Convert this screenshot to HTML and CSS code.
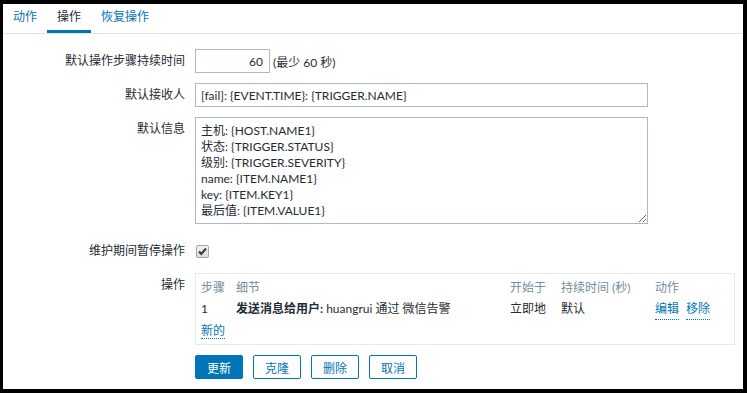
FILE: index.html
```html
<!DOCTYPE html>
<html lang="zh-CN">
<head>
<meta charset="UTF-8">
<meta name="viewport" content="width=device-width, initial-scale=1.0">
<title>操作</title>
<link rel="stylesheet" href="styles.css">
</head>
<body>

<div class="frame">
  <ul class="tabs">
    <li class="tab"><a href="#">动作</a></li>
    <li class="tab active"><a href="#">操作</a></li>
    <li class="tab"><a href="#">恢复操作</a></li>
  </ul>

  <div class="form">
    <label class="label">默认操作步骤持续时间</label>
    <div class="field">
      <input type="text" class="input input-step" value="60">
      <span class="hint">(最少 60 秒)</span>
    </div>

    <label class="label">默认接收人</label>
    <div class="field">
      <input type="text" class="input input-wide" value="[fail]: {EVENT.TIME}: {TRIGGER.NAME}">
    </div>

    <label class="label">默认信息</label>
    <div class="field">
      <textarea class="textarea">主机: {HOST.NAME1}
状态: {TRIGGER.STATUS}
级别: {TRIGGER.SEVERITY}
name: {ITEM.NAME1}
key: {ITEM.KEY1}
最后值: {ITEM.VALUE1}</textarea>
    </div>

    <label class="label">维护期间暂停操作</label>
    <div class="field field-check">
      <span class="checkbox">
        <svg width="11" height="11" viewBox="0 0 11 11"><path d="M2 5.5 L4.3 8 L9 2.5" fill="none" stroke="#3a3a3a" stroke-width="2"/></svg>
      </span>
    </div>

    <label class="label">操作</label>
    <div class="field field-ops">
      <div class="ops">
        <div class="ops-row ops-head">
          <span>步骤</span>
          <span>细节</span>
          <span>开始于</span>
          <span>持续时间 (秒)</span>
          <span>动作</span>
        </div>
        <div class="ops-row">
          <span>1</span>
          <span><b>发送消息给用户:</b> huangrui 通过 微信告警</span>
          <span>立即地</span>
          <span>默认</span>
          <span class="ops-links"><a href="#" class="link">编辑</a><a href="#" class="link">移除</a></span>
        </div>
        <div class="ops-new">
          <a href="#" class="link">新的</a>
        </div>
      </div>
    </div>

    <div class="label"></div>
    <div class="field buttons">
      <button class="btn btn-main">更新</button>
      <button class="btn">克隆</button>
      <button class="btn">删除</button>
      <button class="btn">取消</button>
    </div>
  </div>
</div>

</body>
</html>
```

FILE: styles.css
```css
body {
  margin: 0;
  font-family: Lato, "Noto Sans CJK SC", sans-serif;
  font-size: 12px;
  color: #1f2c33;
  background-color: #000;
}
.frame {
  box-sizing: border-box;
  height: 393px;
  border: 4px solid #000;
  border-left-width: 3px;
  background-color: #fff;
}
.tabs {
  list-style: none;
  margin: 0;
  padding: 0;
  display: flex;
  border-bottom: 1px solid #dfe4e7;
}
.tab a {
  display: block;
  padding: 0 10px;
  line-height: 26px;
  border-bottom: 3px solid transparent;
  color: #0275b8;
  text-decoration: none;
}
.tab.active a {
  color: #1f2c33;
  border-bottom-color: #0275b8;
}
.form {
  display: grid;
  grid-template-columns: 192px 1fr;
  row-gap: 10px;
  padding-top: 15px;
}
.label {
  box-sizing: border-box;
  padding-right: 10px;
  text-align: right;
  line-height: 24px;
}
.field {
  display: flex;
  align-items: center;
}
.input {
  box-sizing: border-box;
  height: 24px;
  margin: 0;
  padding: 0 5px;
  border: 1px solid #acbbc2;
  font: inherit;
  color: #1f2c33;
  background: #fff;
}
.input-step {
  width: 75px;
  text-align: right;
  padding-right: 6px;
}
.hint {
  margin-left: 3px;
}
.input-wide {
  width: 453px;
}
.textarea {
  box-sizing: border-box;
  display: block;
  width: 453px;
  height: 107px;
  margin: 0 0 5px;
  padding: 5px;
  border: 1px solid #acbbc2;
  font: inherit;
  line-height: 16px;
  color: #1f2c33;
}
.field-check {
  height: 24px;
}
.checkbox {
  box-sizing: border-box;
  display: flex;
  align-items: center;
  justify-content: center;
  width: 13px;
  height: 13px;
  margin-left: 1px;
  border: 1px solid #a0a8ad;
  border-radius: 2px;
  background: linear-gradient(#f2f2f2, #d9dcde);
}
.field-ops {
  padding-right: 8px;
  align-items: stretch;
}
.ops {
  flex: 1;
  border: 1px solid #e6e9eb;
  padding: 3px 5px;
}
.ops-row {
  display: grid;
  grid-template-columns: 35px 274px 51px 94px 1fr;
  line-height: 21px;
}
.ops-head {
  color: #768d99;
}
.ops-links {
  display: flex;
  gap: 7px;
}
.ops-new {
  line-height: 21px;
}
.link {
  color: #0275b8;
  text-decoration: none;
  border-bottom: 1px dotted #0275b8;
}
.buttons {
  gap: 10px;
}
.btn {
  box-sizing: border-box;
  height: 24px;
  min-width: 48px;
  padding: 0 11px;
  border: 1px solid #0275b8;
  border-radius: 2px;
  background: #fff;
  color: #0275b8;
  font: inherit;
}
.btn-main {
  background: #0275b8;
  color: #fff;
}
```
